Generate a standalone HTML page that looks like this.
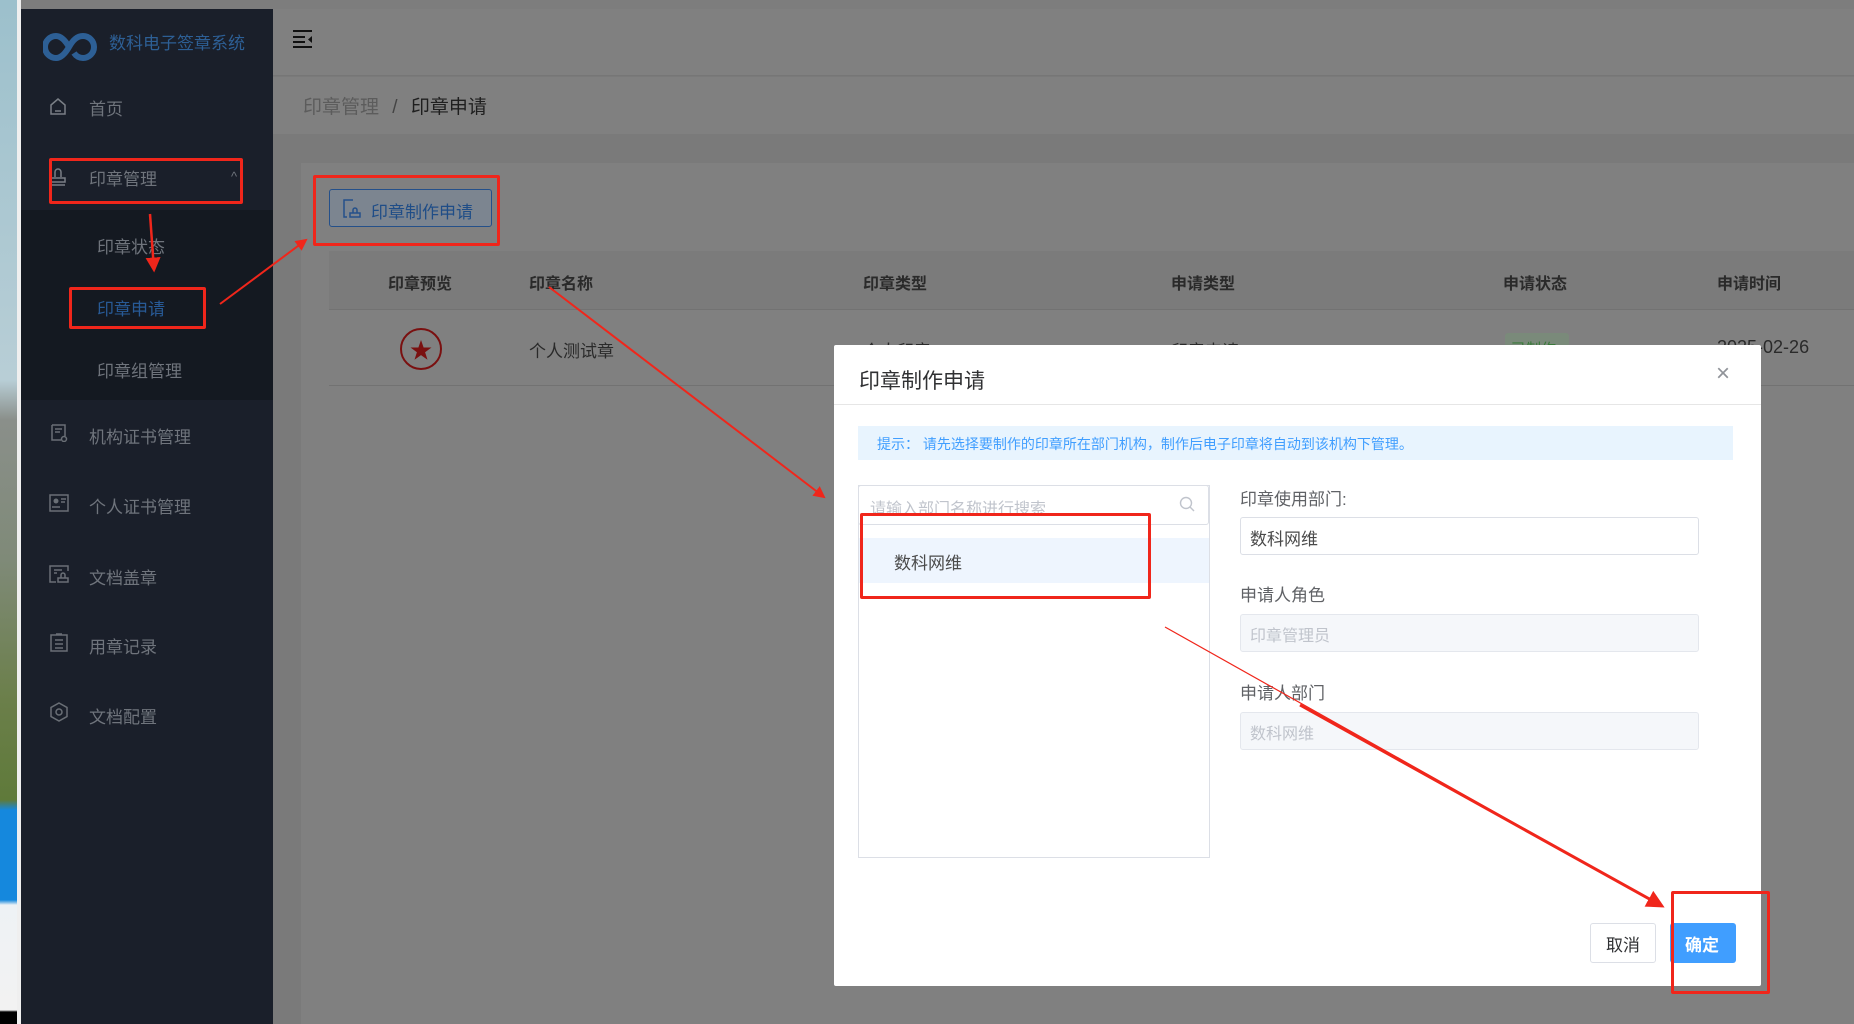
<!DOCTYPE html>
<html><head><meta charset="utf-8">
<style>
*{margin:0;padding:0;box-sizing:border-box}
body{width:1854px;height:1024px;overflow:hidden;position:relative;background:#7a7a7a;font-family:"Liberation Sans","Noto Sans CJK SC",sans-serif}
.a{position:absolute}
.t{position:absolute;white-space:nowrap}
.side .t{color:#6f747c;font-size:17px}
.red{position:absolute;border:3px solid #f0261b;border-radius:2px}
</style></head><body>
<!-- desktop strip -->
<div class="a" style="left:0;top:0;width:17px;height:1024px;background:linear-gradient(#9cc0cc 0,#b8ced6 380px,#8a8f8a 420px,#7f8a78 560px,#6b7f4a 700px,#5f7a3a 800px,#1588dd 810px,#1588dd 900px,#eef2f5 905px,#f2f2f2 1010px,#000 1012px)"></div>
<div class="a" style="left:17px;top:0;width:4px;height:1024px;background:#efefef"></div>
<div class="a" style="left:21px;top:0;width:1833px;height:9px;background:#7d7d7d"></div>
<!-- sidebar -->
<div class="a side" style="left:21px;top:9px;width:252px;height:1015px;background:#1a1f2a">
 <svg class="a" style="left:22px;top:20px" width="56" height="36" viewBox="0 0 56 36"><path d="M26 18c-4-7-8-11-13-11a11 11 0 0 0 0 22c5 0 9-4 13-11s8-11 14-11a11 11 0 0 1 0 22c-4 0-7-2-9-5" fill="none" stroke="#2d5f95" stroke-width="6"/></svg>
 <div class="t" style="left:88px;top:20px;color:#2d5f95;font-size:17px">数科电子签章系统</div>
 <div class="a" style="left:0;top:201px;width:252px;height:190px;background:#141921"></div>
 <svg class="a" style="left:28px;top:88px" width="18" height="18"><path d="M2 8L9 2l7 6v9H2z M6 14h6" fill="none" stroke="#7a7f86" stroke-width="1.5"/></svg>
 <div class="t" style="left:68px;top:86px">首页</div>
 <svg class="a" style="left:28px;top:158px" width="18" height="20"><path d="M6 10V5a3 3 0 016 0v5 M2 11h14v4H2z M2 18h14" fill="none" stroke="#7a7f86" stroke-width="1.5"/></svg>
 <div class="t" style="left:68px;top:156px">印章管理</div>
 <div class="t" style="left:210px;top:160px;font-size:13px">^</div>
 <div class="t" style="left:76px;top:224px">印章状态</div>
 <div class="t" style="left:76px;top:286px;color:#285a96">印章申请</div>
 <div class="t" style="left:76px;top:348px">印章组管理</div>
 <svg class="a" style="left:29px;top:415px" width="18" height="18"><path d="M2 1h13v11 M2 1v15h9 M5 5h7 M5 8h5" fill="none" stroke="#6a6f76" stroke-width="1.5"/><circle cx="14" cy="15" r="2.5" fill="none" stroke="#6a6f76" stroke-width="1.5"/></svg>
 <div class="t" style="left:68px;top:414px">机构证书管理</div>
 <svg class="a" style="left:28px;top:485px" width="20" height="18"><rect x="1" y="1" width="18" height="16" fill="none" stroke="#6a6f76" stroke-width="1.5"/><circle cx="7" cy="7" r="2.5" fill="#6a6f76"/><path d="M3 13h8 M12 5h5 M12 8h4" stroke="#6a6f76" stroke-width="1.5"/></svg>
 <div class="t" style="left:68px;top:484px">个人证书管理</div>
 <svg class="a" style="left:28px;top:556px" width="20" height="18"><path d="M19 6V1H1v16h6 M5 5h8 M5 8h3 M9 17h10v-4h-10z M12 13v-3a2 2 0 014 0v3" fill="none" stroke="#6a6f76" stroke-width="1.5"/></svg>
 <div class="t" style="left:68px;top:555px">文档盖章</div>
 <svg class="a" style="left:29px;top:624px" width="18" height="19"><rect x="1" y="2" width="16" height="16" fill="none" stroke="#6a6f76" stroke-width="1.5"/><path d="M6 1h6 M5 7h8 M5 11h8 M5 15h8" stroke="#6a6f76" stroke-width="1.5"/></svg>
 <div class="t" style="left:68px;top:624px">用章记录</div>
 <svg class="a" style="left:29px;top:693px" width="18" height="20"><path d="M9 1l8 4.5v9L9 19l-8-4.5v-9z" fill="none" stroke="#6a6f76" stroke-width="1.5"/><circle cx="9" cy="10" r="3" fill="none" stroke="#6a6f76" stroke-width="1.5"/></svg>
 <div class="t" style="left:68px;top:694px">文档配置</div>
</div>
<!-- header -->
<div class="a" style="left:273px;top:9px;width:1581px;height:67px;background:#808080;border-bottom:1px solid #767676"></div>
<svg class="a" style="left:293px;top:30px" width="20" height="18"><path d="M0 1h19 M0 7h12 M0 12h12 M0 17h19" stroke="#111" stroke-width="2"/><path d="M19 6l-4 3.5 4 3.5z" fill="#111"/></svg>
<div class="a" style="left:273px;top:77px;width:1581px;height:57px;background:#808080"></div>
<div class="t" style="left:303px;top:92px;font-size:19px;color:#5c5c5c">印章管理 <span style="margin:0 8px;color:#444">/</span> <span style="color:#1f1f1f">印章申请</span></div>
<!-- card -->
<div class="a" style="left:301px;top:163px;width:1553px;height:861px;background:#808080"></div>
<div class="a" style="left:329px;top:189px;width:163px;height:38px;border:1px solid #24508a;border-radius:3px;background:#7c8590"></div>
<svg class="a" style="left:343px;top:199px" width="18" height="19"><path d="M10 1H1v17h3 M7 18h10v-4H7z M10 14v-3a2 2 0 014 0v3" fill="none" stroke="#24508a" stroke-width="1.5"/></svg>
<div class="t" style="left:371px;top:198px;font-size:17px;color:#1f4d87">印章制作申请</div>
<div class="a" style="left:329px;top:251px;width:1525px;height:59px;background:#7b7b7b;border-bottom:1px solid #727272"></div>
<div class="t" style="left:388px;top:270px;font-size:16px;font-weight:bold;color:#2a2a2a">印章预览</div>
<div class="t" style="left:529px;top:270px;font-size:16px;font-weight:bold;color:#2a2a2a">印章名称</div>
<div class="t" style="left:863px;top:270px;font-size:16px;font-weight:bold;color:#2a2a2a">印章类型</div>
<div class="t" style="left:1171px;top:270px;font-size:16px;font-weight:bold;color:#2a2a2a">申请类型</div>
<div class="t" style="left:1503px;top:270px;font-size:16px;font-weight:bold;color:#2a2a2a">申请状态</div>
<div class="t" style="left:1717px;top:270px;font-size:16px;font-weight:bold;color:#2a2a2a">申请时间</div>
<div class="a" style="left:329px;top:385px;width:1525px;height:1px;background:#727272"></div>
<svg class="a" style="left:398px;top:326px" width="46" height="46"><circle cx="23" cy="23" r="20" fill="none" stroke="#7a1010" stroke-width="2"/><path d="M23 14l2.6 7.5h7.9l-6.4 4.7 2.4 7.6-6.5-4.7-6.5 4.7 2.4-7.6-6.4-4.7h7.9z" fill="#7a1010"/></svg>
<div class="t" style="left:529px;top:337px;font-size:17px;color:#2a2a2a">个人测试章</div>
<div class="t" style="left:863px;top:337px;font-size:17px;color:#2a2a2a">个人印章</div>
<div class="t" style="left:1171px;top:337px;font-size:17px;color:#2a2a2a">印章申请</div>
<div class="a" style="left:1505px;top:333px;width:64px;height:30px;background:#7a8a7a;border-radius:3px"></div>
<div class="t" style="left:1511px;top:338px;font-size:15px;color:#3a7a3a">已制作</div>
<div class="t" style="left:1717px;top:337px;font-size:18px;color:#2a2a2a">2025-02-26</div>
<!-- dialog -->
<div class="a" style="left:834px;top:345px;width:927px;height:641px;background:#fff;border-radius:2px">
 <div class="t" style="left:25px;top:20px;font-size:21px;color:#303133">印章制作申请</div>
 <div class="t" style="left:882px;top:15px;font-size:24px;color:#909399">×</div>
 <div class="a" style="left:0;top:59px;width:927px;height:1px;background:#e6e6e6"></div>
 <div class="a" style="left:24px;top:81px;width:875px;height:34px;background:#e8f4fe"></div>
 <div class="t" style="left:43px;top:89px;font-size:14px;color:#409eff">提示： 请先选择要制作的印章所在部门机构，制作后电子印章将自动到该机构下管理。</div>
 <div class="a" style="left:24px;top:140px;width:352px;height:373px;border:1px solid #dcdfe6"></div>
 <div class="a" style="left:24px;top:140px;width:351px;height:40px;border:1px solid #dcdfe6;background:#fff;border-radius:3px"></div>
 <div class="t" style="left:36px;top:150px;font-size:16px;color:#c0c4cc">请输入部门名称进行搜索</div>
 <svg class="a" style="left:345px;top:151px" width="16" height="18"><circle cx="7" cy="7" r="5.5" fill="none" stroke="#c0c4cc" stroke-width="1.4"/><path d="M11 11l4 4" stroke="#c0c4cc" stroke-width="1.4"/></svg>
 <div class="a" style="left:25px;top:193px;width:350px;height:45px;background:#eef5fe"></div>
 <div class="t" style="left:60px;top:204px;font-size:17px;color:#4a4a4a">数科网维</div>
 <div class="t" style="left:406px;top:140px;font-size:17px;color:#606266">印章使用部门:</div>
 <div class="a" style="left:406px;top:172px;width:459px;height:38px;border:1px solid #dcdfe6;border-radius:3px"></div>
 <div class="t" style="left:416px;top:180px;font-size:17px;color:#4a4a4a">数科网维</div>
 <div class="t" style="left:406px;top:236px;font-size:17px;color:#606266">申请人角色</div>
 <div class="a" style="left:406px;top:269px;width:459px;height:38px;border:1px solid #e4e7ed;border-radius:3px;background:#f5f7fa"></div>
 <div class="t" style="left:416px;top:277px;font-size:16px;color:#c0c4cc">印章管理员</div>
 <div class="t" style="left:406px;top:334px;font-size:17px;color:#606266">申请人部门</div>
 <div class="a" style="left:406px;top:367px;width:459px;height:38px;border:1px solid #e4e7ed;border-radius:3px;background:#f5f7fa"></div>
 <div class="t" style="left:416px;top:375px;font-size:16px;color:#c0c4cc">数科网维</div>
 <div class="a" style="left:756px;top:578px;width:66px;height:40px;border:1px solid #dcdfe6;border-radius:3px"></div>
 <div class="t" style="left:772px;top:586px;font-size:17px;color:#303133">取消</div>
 <div class="a" style="left:836px;top:578px;width:66px;height:40px;background:#409eff;border-radius:3px"></div>
 <div class="t" style="left:851px;top:586px;font-size:17px;color:#fff;font-weight:bold">确定</div>
</div>
<!-- annotations -->
<div class="red" style="left:49px;top:158px;width:194px;height:46px"></div>
<div class="red" style="left:69px;top:287px;width:137px;height:42px"></div>
<div class="red" style="left:313px;top:175px;width:187px;height:71px"></div>
<div class="red" style="left:860px;top:513px;width:291px;height:86px"></div>
<div class="red" style="left:1671px;top:891px;width:99px;height:103px"></div>
<svg class="a" style="left:0;top:0" width="1854" height="1024">
 <defs><marker id="m" markerWidth="6" markerHeight="6" refX="5" refY="3" orient="auto" markerUnits="strokeWidth"><path d="M0 0L6 3 0 6z" fill="#f0261b"/></marker></defs>
 <g stroke="#f0261b" fill="none">
 <path d="M150 214L154 270" stroke-width="2.5" marker-end="url(#m)"/>
 <path d="M220 304L306 240" stroke-width="2" marker-end="url(#m)"/>
 <path d="M549 287L824 497" stroke-width="2" marker-end="url(#m)"/>
 <path d="M1165 627L1662 906" stroke-width="1.2"/>
 <path d="M1300 705L1662 906" stroke-width="3" marker-end="url(#m)"/>
 </g>
</svg>
</body></html>
